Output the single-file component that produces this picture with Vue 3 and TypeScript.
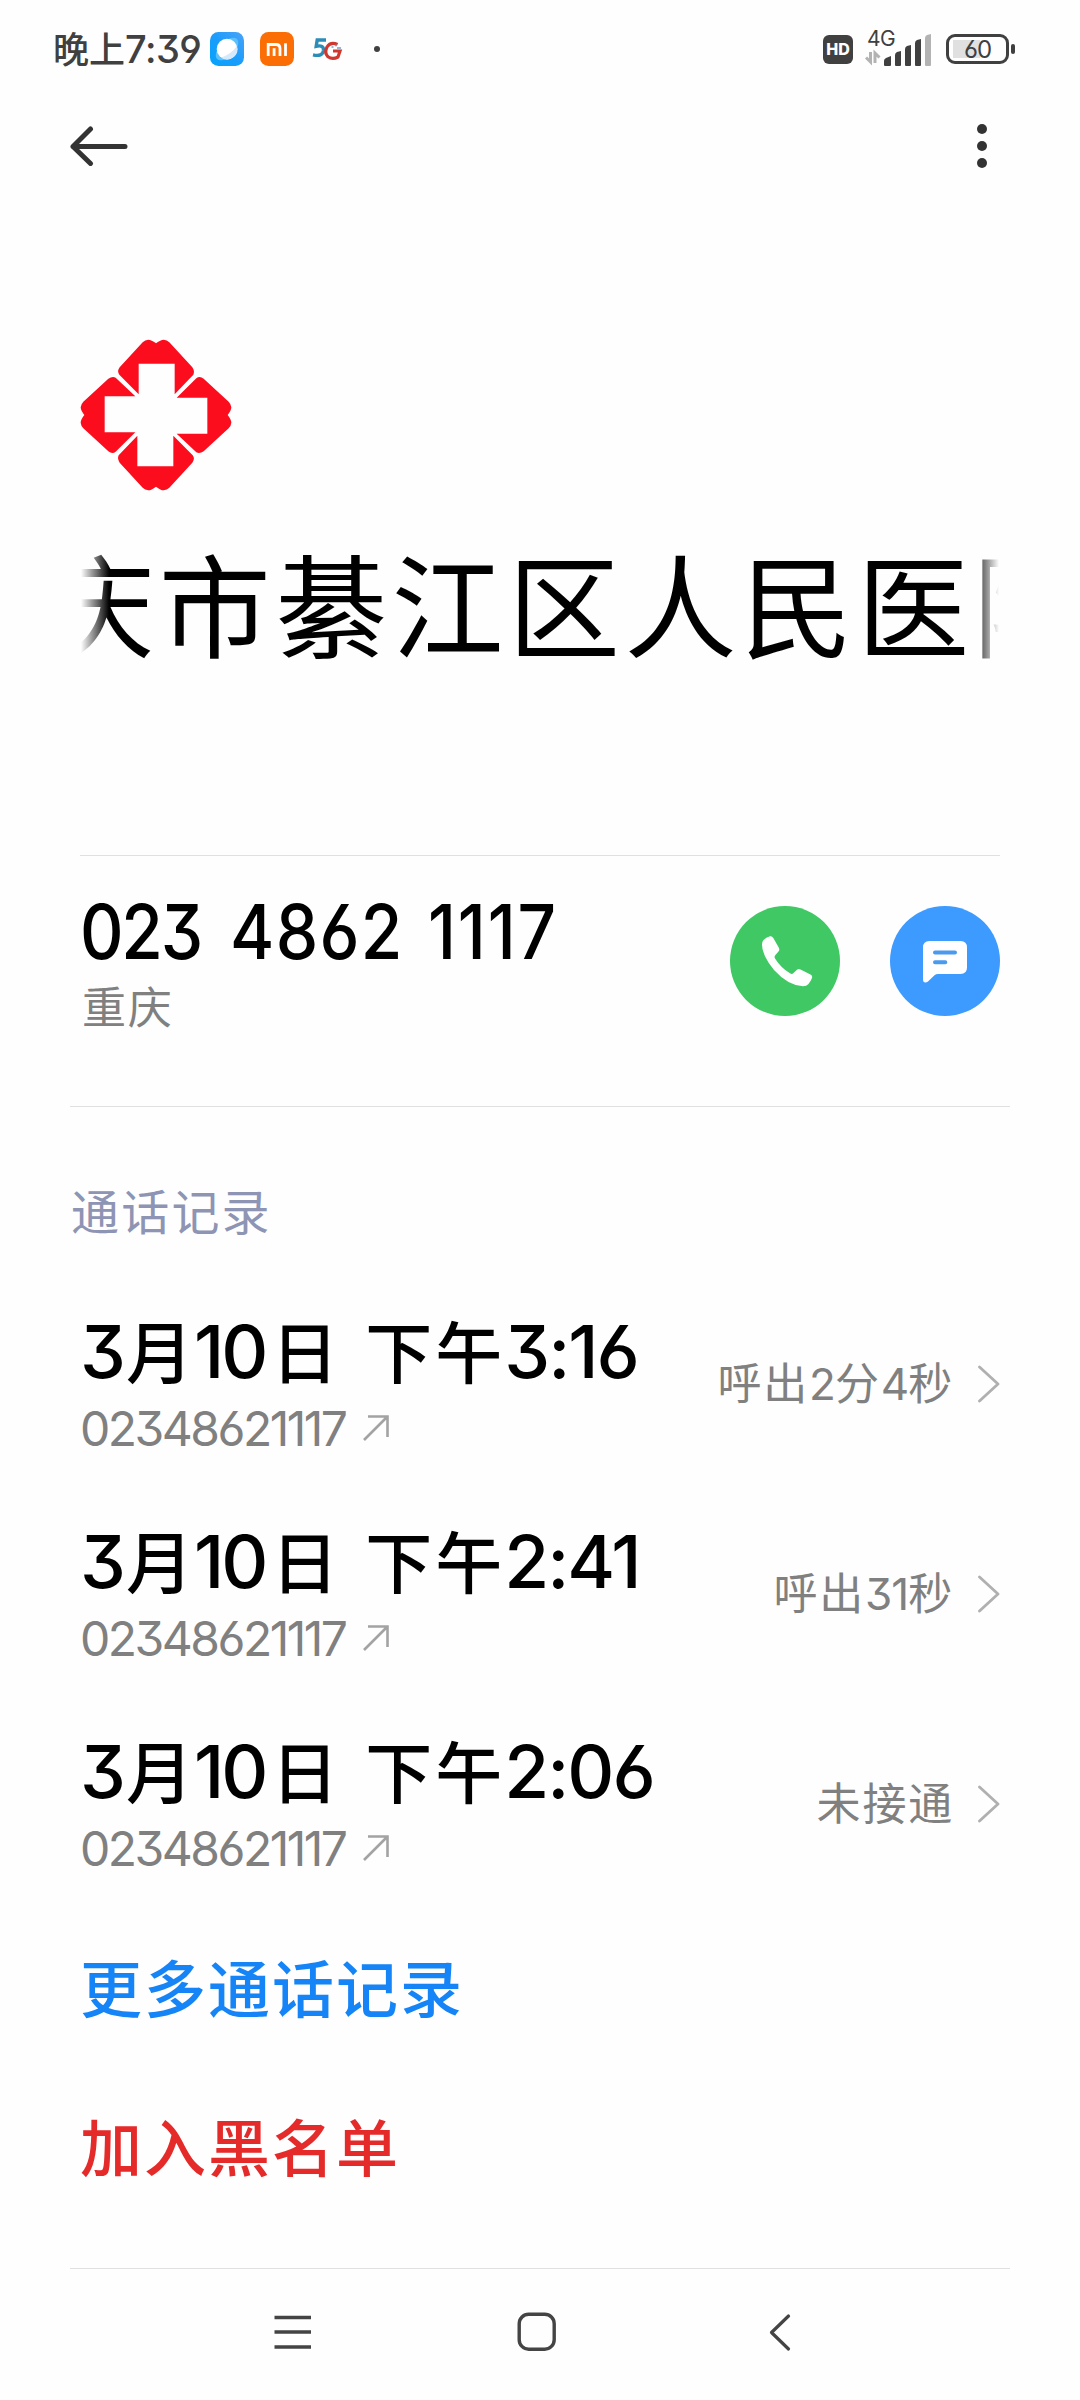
<script setup lang="ts">
interface Part {
  text: string
  kind: 'num' | 'han'
}

interface CallRecord {
  id: number
  title: Part[]
  phone: string
  result: Part[]
}

const split = (s: string): Part[] =>
  (s.match(/[\d:]+|[^\d:]+/g) ?? []).map((text) => ({
    text,
    kind: /[\d:]/.test(text) ? 'num' : 'han',
  }))

const phone = '02348621117'
const phoneGroups = ['023', '4862', '1117']

const calls: CallRecord[] = [
  { id: 1, title: split('3月10日 下午3:16'), phone, result: split('呼出2分4秒') },
  { id: 2, title: split('3月10日 下午2:41'), phone, result: split('呼出31秒') },
  { id: 3, title: split('3月10日 下午2:06'), phone, result: split('未接通') },
]

const petals = [0, 90, 180, 270]
</script>

<template>
  <div class="screen">
    <header class="status">
      <div class="status-left">
        <span class="clock"><span class="clock-han">晚上</span>7:39</span>
        <svg class="app-icon" viewBox="0 0 34 34">
          <defs>
            <linearGradient id="sky" x1="1" y1="0" x2="0" y2="1">
              <stop offset="0" stop-color="#4aa3f7" />
              <stop offset="0.5" stop-color="#1c9cfb" />
              <stop offset="1" stop-color="#04a4fb" />
            </linearGradient>
          </defs>
          <rect width="34" height="34" rx="8.5" fill="url(#sky)" />
          <ellipse cx="17" cy="17" rx="14" ry="7.5" transform="rotate(-45 17 17)" fill="#5bc0fb" />
          <circle cx="17" cy="17" r="10.3" fill="#fff" />
          <path d="M27 14 A10.3 10.3 0 0 1 11 25.400 Q21 22.500 27 14Z" fill="#d5e9fa" />
        </svg>
        <svg class="app-icon" viewBox="0 0 34 34">
          <rect width="34" height="34" rx="8.5" fill="#fb6d05" />
          <path d="M8.200 24V12.500H16Q20 12.500 20 16.500V24M14.100 16.200V24M25.500 11.200V24" fill="none" stroke="#fff" stroke-width="2.800" />
        </svg>
        <svg class="app-icon" viewBox="0 0 34 34">
          <path d="M16 8H7.200L6.200 14.300Q14 12.500 13.500 18.500Q12.500 25 3 22.800" fill="none" stroke="#2b8cb8" stroke-width="3.400" />
          <path d="M27.500 12.500Q20.500 9.500 17 15Q14 21 18 24.800Q22.500 28 28 25L30 19H23" fill="none" stroke="#d0382f" stroke-width="3.200" />
          <path d="M21.500 15h2M25 13.500h2M27 16h4" stroke="#7c9fc0" stroke-width="1.400" />
        </svg>
        <i class="dot"></i>
      </div>
      <div class="status-right">
        <span class="hd">HD</span>
        <div class="network">
          <span class="gen">4G</span>
          <svg class="signal" viewBox="0 0 68 36">
            <path d="M5.500 21V31L1 26.500M10 32V22L14.500 26.500" fill="none" stroke="#b3b3b3" stroke-width="3" />
            <path d="M19 34V29.500Q19 28 21 27L26 25V34Q26 35 25 35H20Q19 35 19 34Z" fill="#404040" />
            <path d="M30 34V24Q30 22 32 21L36 20V34Q36 35 35 35H31Q30 35 30 34Z" fill="#404040" />
            <path d="M40 34V18Q40 16 42 15L46 14V34Q46 35 45 35H41Q40 35 40 34Z" fill="#404040" />
            <path d="M50 34V12Q50 10 52 9L56 8V34Q56 35 55 35H51Q50 35 50 34Z" fill="#404040" />
            <path d="M60 34V7Q60 5 62 4L66 3V34Q66 35 65 35H61Q60 35 60 34Z" fill="#b3b3b3" />
          </svg>
        </div>
        <div class="battery">
          <div class="cell"><span>60</span></div>
          <i class="nub"></i>
        </div>
      </div>
    </header>

    <nav class="appbar">
      <svg class="back" viewBox="0 0 60 40">
        <path d="M55 20.500H3M20.500 3L3 20.500L20.500 37.500" fill="none" stroke="#333" stroke-width="5" stroke-linecap="round" stroke-linejoin="round" />
      </svg>
      <div class="more"><i></i><i></i><i></i></div>
    </nav>

    <section class="profile">
      <svg class="logo" viewBox="-228 -228 456 456">
        <path
          v-for="deg in petals"
          :key="deg"
          :transform="`rotate(${deg})`"
          d="M0 -215 Q14 -226 23 -226 Q33 -225 40 -218 L109 -143 Q117 -131 112 -121 L56 -62 V-154 H-52 V-62 L-110 -121 Q-118 -131 -109 -143 L-40 -218 Q-33 -225 -23 -226 Q-14 -226 0 -215Z"
          fill="#fc0d1e"
        />
      </svg>
      <div class="marquee"><span class="name">重庆市綦江区人民医院</span></div>
    </section>

    <section class="contact">
      <div class="contact-text">
        <div class="number"><span v-for="g in phoneGroups" :key="g">{{ g }}</span></div>
        <div class="region">重庆</div>
      </div>
      <div class="actions">
        <button class="round call" aria-label="拨号">
          <svg viewBox="0 0 110 110">
            <path d="M33.500 34Q36 31.500 40 30.300Q42 29.700 43.300 32L49 42Q50 44 48.500 45.500L45 49.500Q44 51 45 52.500Q51 62 60 67.300Q62 68.600 63.500 67L67 63.700Q68.500 62.500 70.500 63.500L80.500 68.500Q83 70 81.800 72.500Q80.500 75.500 78.500 78Q76.500 80.300 73 80.300Q58 79.500 44 64Q32 49.500 32 38.500Q32 35.500 33.500 34Z" fill="#fff" />
          </svg>
        </button>
        <button class="round sms" aria-label="短信">
          <svg viewBox="0 0 110 110">
            <path d="M39.500 35H70.500Q77 35 77 41.500V61.500Q77 68 70.500 68H48Q46 68 44.500 69.300L38 75.500Q36.500 76.700 35 76.500Q33 76.200 33 74V41.500Q33 35 39.500 35Z" fill="#fff" />
            <path d="M45 46.500H65M45 56.300H55.300" stroke="#4a9af0" stroke-width="4" stroke-linecap="round" />
          </svg>
        </button>
      </div>
    </section>

    <section class="history">
      <h2 class="heading">通话记录</h2>
      <div v-for="call in calls" :key="call.id" class="row">
        <div class="row-main">
          <div class="title">
            <span v-for="(p, i) in call.title" :key="i" :class="p.kind">{{ p.text }}</span>
          </div>
          <div class="sub">
            <span class="sub-num">{{ call.phone }}</span>
            <svg class="out" viewBox="0 0 28 28">
              <path d="M2 26L25.500 2.500M6 2.500H25.500V23" fill="none" stroke="#a3a3a3" stroke-width="2.600" />
            </svg>
          </div>
        </div>
        <div class="row-side">
          <span class="result">
            <span v-for="(p, i) in call.result" :key="i" :class="p.kind">{{ p.text }}</span>
          </span>
          <svg class="chevron" viewBox="0 0 22 38">
            <path d="M1.500 2L20 19L1.500 36" fill="none" stroke="#b0b0b0" stroke-width="2.800" stroke-linecap="round" stroke-linejoin="round" />
          </svg>
        </div>
      </div>
      <div class="link more-link">更多通话记录</div>
      <div class="link block-link">加入黑名单</div>
    </section>

    <footer class="navbar">
      <svg class="nav-icon" viewBox="0 0 40 40">
        <path d="M1.500 5.500H38M1.500 20H38M1.500 35H38" stroke="#444" stroke-width="3.400" />
      </svg>
      <svg class="nav-icon" viewBox="0 0 40 40">
        <rect x="2.200" y="2.200" width="35" height="35" rx="9.500" fill="none" stroke="#444" stroke-width="3.400" />
      </svg>
      <svg class="nav-icon" viewBox="0 0 40 40">
        <path d="M27.500 4L10.500 20.500L27.500 37" fill="none" stroke="#444" stroke-width="3.200" stroke-linecap="round" stroke-linejoin="round" />
      </svg>
    </footer>
  </div>
</template>

<style>
body {
  background: #fefefe;
}
</style>

<style scoped>
.screen {
  width: 1080px;
  height: 2400px;
  overflow: hidden;
  display: flex;
  flex-direction: column;
  background: #fefefe;
  color: #000;
  font-family: Inter, "Noto Sans CJK SC", sans-serif;
  font-feature-settings: "cv03", "cv04", "cv09";
  white-space: nowrap;
}

.status {
  height: 98px;
  box-sizing: border-box;
  padding: 0 65px 0 53px;
  display: flex;
  justify-content: space-between;
  align-items: center;
  color: #404040;
}
.status-left,
.status-right {
  display: flex;
  align-items: center;
}
.clock {
  width: 157px;
  font-size: 38px;
  line-height: 44px;
  font-weight: 500;
  letter-spacing: -0.5px;
}
.clock-han {
  font-size: 36px;
  letter-spacing: 0;
}
.app-icon {
  width: 34px;
  height: 34px;
  margin-right: 16px;
}
.dot {
  width: 6px;
  height: 6px;
  margin-left: 14px;
  border-radius: 50%;
  background: #404040;
}
.hd {
  width: 30px;
  height: 29px;
  border-radius: 6px;
  background: #404040;
  color: #fff;
  font: 800 16px/29px Inter, sans-serif;
  text-align: center;
}
.network {
  position: relative;
  width: 68px;
  height: 36px;
  margin-left: 12px;
}
.signal {
  display: block;
  width: 68px;
  height: 36px;
}
.gen {
  position: absolute;
  left: 2px;
  top: -3px;
  font-size: 21px;
  line-height: 22px;
  letter-spacing: -0.5px;
}
.battery {
  display: flex;
  align-items: center;
  margin-left: 13px;
}
.cell {
  width: 63px;
  height: 30px;
  box-sizing: border-box;
  border: 3px solid #404040;
  border-radius: 9px;
  background: linear-gradient(#e0e0e0, #e0e0e0) 4px 3px / 27px 18px no-repeat;
  font-size: 24px;
  line-height: 25px;
  letter-spacing: -1px;
  text-align: center;
}
.nub {
  width: 4px;
  height: 10px;
  margin-left: 2px;
  border-radius: 2px;
  background: #404040;
}

.appbar {
  height: 96px;
  padding: 0 93px 0 70px;
  display: flex;
  align-items: center;
  justify-content: space-between;
}
.back {
  width: 60px;
  height: 40px;
}
.more {
  display: flex;
  flex-direction: column;
  gap: 7px;
}
.more i {
  width: 10px;
  height: 10px;
  border-radius: 50%;
  background: #333;
}

.profile {
  height: 662px;
  margin: 0 80px;
  box-sizing: border-box;
  padding-top: 145px;
  border-bottom: 1px solid #e0e0e0;
}
.logo {
  display: block;
  width: 152px;
  height: 152px;
}
.marquee {
  margin: 38px 0 0 1px;
  width: 918px;
  height: 160px;
  overflow: hidden;
  -webkit-mask-image: linear-gradient(90deg, transparent, #000 28px, #000 890px, transparent);
  mask-image: linear-gradient(90deg, transparent, #000 28px, #000 890px, transparent);
}
.name {
  display: block;
  margin-left: -155px;
  font-size: 112px;
  line-height: 160px;
  letter-spacing: 4.4px;
}

.contact {
  height: 251px;
  box-sizing: border-box;
  margin: 0 70px;
  padding: 36px 10px 0;
  display: flex;
  justify-content: space-between;
  border-bottom: 1px solid #e0e0e0;
}
.number {
  display: flex;
  font-size: 75px;
  line-height: 80px;
  font-weight: 500;
}
.number span {
  transform: scaleX(0.9);
  transform-origin: left;
}
.number span:nth-child(1) {
  width: 150px;
  letter-spacing: -2.500px;
}
.number span:nth-child(2) {
  width: 198px;
  letter-spacing: 1.500px;
}
.number span:nth-child(3) {
  width: 140px;
  letter-spacing: 2px;
}
.region {
  margin: 8px 0 0 2px;
  font-size: 44px;
  line-height: 56px;
  letter-spacing: 1.8px;
  color: #808080;
}
.actions {
  display: flex;
  gap: 50px;
  padding-top: 14px;
}
.round {
  width: 110px;
  height: 110px;
  padding: 0;
  border: 0;
  border-radius: 50%;
}
.round svg {
  display: block;
}
.call {
  background: #3fc863;
}
.sms {
  background: #3d9aff;
}

.history {
  height: 1162px;
  box-sizing: border-box;
  margin: 0 70px;
  padding: 74px 10px 0;
  border-bottom: 1px solid #e0e0e0;
}
.heading {
  margin: 0 0 0 -9px;
  font-size: 48px;
  line-height: 64px;
  font-weight: 400;
  letter-spacing: 2.2px;
  color: #8e94b3;
}
.row {
  height: 210px;
  display: flex;
  justify-content: space-between;
}
.heading + .row {
  margin-top: 67px;
}
.title {
  display: flex;
  align-items: baseline;
  font-size: 73px;
  line-height: 80px;
  font-weight: 500;
}
.title .num {
  letter-spacing: -3px;
}
.title .han {
  font-size: 67px;
  letter-spacing: 3px;
  word-spacing: 3px;
  white-space: pre;
}
.title span:nth-child(1) {
  margin-right: 3px;
}
.title span:nth-child(2) {
  margin-right: -2px;
}
.title span:nth-child(3) {
  margin-right: 6px;
}
.title span:nth-child(5) {
  margin-left: -1px;
  letter-spacing: -2px;
}
.sub {
  display: flex;
  align-items: center;
  margin-top: 6px;
  color: #808080;
}
.sub-num {
  width: 282px;
  font-size: 48px;
  line-height: 58px;
  letter-spacing: -2.500px;
}
.out {
  width: 28px;
  height: 28px;
  margin-bottom: 2px;
}
.row-side {
  height: 143px;
  display: flex;
  align-items: center;
}
.result {
  margin-right: 24px;
  font-size: 44px;
  line-height: 56px;
  color: #808080;
}
.result .han {
  letter-spacing: 1.8px;
}
.result .num {
  letter-spacing: -1px;
}
.chevron {
  width: 22px;
  height: 38px;
}
.link {
  font-size: 62px;
  line-height: 80px;
  font-weight: 500;
  letter-spacing: 2px;
}
.more-link {
  margin-top: 9px;
  color: #1584f6;
}
.block-link {
  margin-top: 79px;
  color: #e52a2a;
}

.navbar {
  height: 126px;
  display: flex;
  justify-content: center;
  align-items: center;
  gap: 204px;
  padding-right: 7px;
}
.nav-icon {
  width: 40px;
  height: 40px;
}
</style>
